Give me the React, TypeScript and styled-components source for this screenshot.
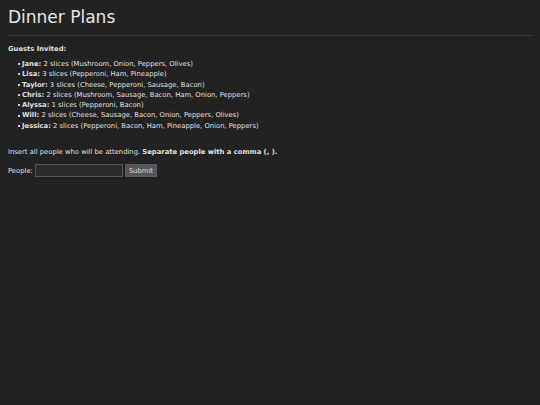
import React, { useState } from "react";
import styled, { createGlobalStyle } from "styled-components";

type Guest = {
  name: string;
  slices: number;
  toppings: string[];
};

const guests: Guest[] = [
  { name: "Jane", slices: 2, toppings: ["Mushroom", "Onion", "Peppers", "Olives"] },
  { name: "Lisa", slices: 3, toppings: ["Pepperoni", "Ham", "Pineapple"] },
  { name: "Taylor", slices: 3, toppings: ["Cheese", "Pepperoni", "Sausage", "Bacon"] },
  { name: "Chris", slices: 2, toppings: ["Mushroom", "Sausage", "Bacon", "Ham", "Onion", "Peppers"] },
  { name: "Alyssa", slices: 1, toppings: ["Pepperoni", "Bacon"] },
  { name: "Will", slices: 2, toppings: ["Cheese", "Sausage", "Bacon", "Onion", "Peppers", "Olives"] },
  { name: "Jessica", slices: 2, toppings: ["Pepperoni", "Bacon", "Ham", "Pineapple", "Onion", "Peppers"] },
];

const App: React.FC = () => {
  const [people, setPeople] = useState("");

  function handleSubmit(e: React.FormEvent) {
    e.preventDefault();
  }

  return (
    <Page>
      <GlobalStyle />
      <Title>Dinner Plans</Title>
      <Label>Guests Invited:</Label>
      <GuestList>
        {guests.map((guest) => (
          <li key={guest.name}>
            <strong>{guest.name}:</strong> {guest.slices} slices ({guest.toppings.join(", ")})
          </li>
        ))}
      </GuestList>
      <Hint>
        Insert all people who will be attending. <strong>Separate people with a comma (, ).</strong>
      </Hint>
      <Form onSubmit={handleSubmit}>
        <label htmlFor="people">People:</label>
        <input id="people" type="text" value={people} onChange={(e) => setPeople(e.target.value)} />
        <button type="submit">Submit</button>
      </Form>
    </Page>
  );
};

const GlobalStyle = createGlobalStyle`
  html, body {
    margin: 0;
    background-color: #222222;
    color: #e0e0e0;
    font-family: "DejaVu Sans", sans-serif;
    font-size: 6.8px;
  }
`;

const Page = styled.div`
  padding: 0 8px;
  min-height: 405px;
`;

const Title = styled.h1`
  margin: 0;
  padding: 7px 0 7px;
  font-size: 17px;
  line-height: 21px;
  font-weight: normal;
  color: #e6e6e6;
  border-bottom: 1px solid #3a3a3a;
`;

const Label = styled.p`
  margin: 8px 0 0;
  line-height: 10px;
  font-weight: bold;
`;

const GuestList = styled.ul`
  margin: 5px 0 0;
  padding-left: 14px;
  list-style: none;

  li {
    line-height: 10.3px;
  }

  li::before {
    content: "";
    display: inline-block;
    width: 2px;
    height: 2px;
    margin-left: -4px;
    margin-right: 2px;
    vertical-align: middle;
    background-color: #d0d0d0;
  }

  strong {
    font-weight: bold;
  }
`;

const Hint = styled.p`
  margin: 16px 0 0;
  line-height: 10px;

  strong {
    font-weight: bold;
  }
`;

const Form = styled.form`
  display: flex;
  align-items: center;
  gap: 2px;
  margin-top: 7px;

  input, button {
    height: 13px;
    box-sizing: border-box;
    font-family: inherit;
    font-size: 6.8px;
  }

  input {
    width: 88px;
    background-color: #2b2b2b;
    border: 1px solid #555555;
    color: #e0e0e0;
  }

  button {
    padding: 0 3px;
    background-color: #555555;
    border: 1px solid #5c5c5c;
    color: #dddddd;
  }
`;

export default App;
